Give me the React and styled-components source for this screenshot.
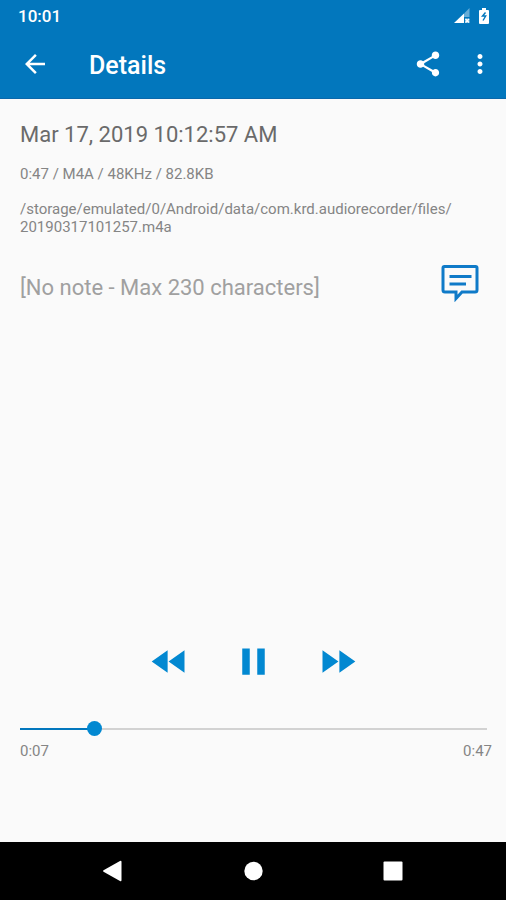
import React, { useState } from 'react';
import styled, { createGlobalStyle } from 'styled-components';

const GlobalStyle = createGlobalStyle`
  * {
    box-sizing: border-box;
  }

  body {
    background-color: #fafafa;
    font-family: Roboto, "Liberation Sans", sans-serif;
    margin: 0;
  }
`;

const Screen = styled.div`
  display: flex;
  flex-direction: column;
  min-height: 100vh;
`;

const Header = styled.header`
  background-color: #0277bd;
  border-bottom: 1px solid #0a68ab;
  color: white;
`;

const StatusBar = styled.div`
  align-items: center;
  display: flex;
  font-size: 17px;
  font-weight: 500;
  height: 32px;
  justify-content: space-between;
  padding: 0 16px 0 18px;
`;

const StatusIcons = styled.div`
  align-items: center;
  display: flex;
  gap: 8px;
`;

const Toolbar = styled.div`
  align-items: center;
  display: flex;
  height: 66px;
  padding: 0 11px 2px 20px;
`;

const Title = styled.h1`
  flex: 1;
  font-size: 25px;
  font-weight: 500;
  line-height: 28px;
  margin: 0;
  padding: 4px 0 0 39px;
`;

const IconButton = styled.button`
  align-items: center;
  background: none;
  border: 0;
  color: ${({ $color }) => $color || 'inherit'};
  cursor: pointer;
  display: flex;
  flex: none;
  height: ${({ $size }) => $size}px;
  justify-content: center;
  padding: 0;
  width: ${({ $size }) => $size}px;
`;

const ToolbarActions = styled.div`
  display: flex;
  gap: 22px;
`;

const Content = styled.main`
  display: flex;
  flex: 1;
  flex-direction: column;
  padding: 22px 20px 82px;
`;

const RecordingName = styled.h2`
  color: #6a6a6a;
  font-size: 22px;
  font-weight: 400;
  line-height: 28px;
  margin: 0;
`;

const Detail = styled.p`
  color: #858585;
  font-size: 15px;
  line-height: 18px;
  margin: ${({ $top }) => $top}px 0 0;
  overflow-wrap: anywhere;
`;

const NoteRow = styled.div`
  align-items: center;
  display: flex;
  justify-content: space-between;
  margin-top: 26px;
  padding-right: 6px;
`;

const Note = styled.p`
  color: #a0a0a0;
  font-size: 22px;
  line-height: 28px;
  margin: 0;
  padding-top: 12px;
`;

const Player = styled.section`
  margin-top: auto;
`;

const Controls = styled.div`
  display: flex;
  gap: 36px;
  justify-content: center;
`;

const SeekBar = styled.input`
  appearance: none;
  background: transparent;
  cursor: pointer;
  display: block;
  height: 16px;
  margin: 36px 0 0;
  width: calc(100% + 1px);

  &::-webkit-slider-runnable-track {
    background:
      linear-gradient(#0277bd, #0277bd) 0 / var(--played) 100% no-repeat,
      #d2d2d2;
    height: 2px;
  }

  &::-webkit-slider-thumb {
    appearance: none;
    background-color: #0288d1;
    border-radius: 50%;
    height: 15px;
    margin-top: -7px;
    width: 15px;
  }
`;

const Times = styled.div`
  color: #858585;
  display: flex;
  font-size: 15px;
  justify-content: space-between;
  line-height: 18px;
  margin: 5px -6px 0 0;
`;

const NavigationBar = styled.nav`
  align-items: center;
  background-color: black;
  color: white;
  display: flex;
  gap: 92px;
  height: 58px;
  justify-content: center;
`;

const DURATION = 47;

function formatTime(seconds) {
  return `${Math.floor(seconds / 60)}:${String(seconds % 60).padStart(2, '0')}`;
}

/**
 * Icon on the 24 unit material grid
 */
function Icon({ d, size }) {
  return (
    <svg width={size} height={size} viewBox="0 0 24 24" fill="currentColor" aria-hidden="true">
      <path d={d} />
    </svg>
  );
}

const icons = {
  back: 'M20 11H7.83l5.59-5.59L12 4l-8 8 8 8 1.41-1.41L7.83 13H20v-2z',
  share: 'M18 16.08c-.76 0-1.44.3-1.96.77L8.91 12.7c.05-.23.09-.46.09-.7s-.04-.47-.09-.7l7.05-4.11c.54.5 1.25.81 2.04.81 1.66 0 3-1.34 3-3s-1.34-3-3-3-3 1.34-3 3c0 .24.04.47.09.7L8.04 9.81C7.5 9.31 6.79 9 6 9c-1.66 0-3 1.34-3 3s1.34 3 3 3c.79 0 1.5-.31 2.04-.81l7.12 4.16c-.05.21-.08.43-.08.65 0 1.61 1.31 2.92 2.92 2.92s2.92-1.31 2.92-2.92-1.31-2.92-2.92-2.92z',
  more: 'M12 8c1.1 0 2-.9 2-2s-.9-2-2-2-2 .9-2 2 .9 2 2 2zm0 2c-1.1 0-2 .9-2 2s.9 2 2 2 2-.9 2-2-.9-2-2-2zm0 6c-1.1 0-2 .9-2 2s.9 2 2 2 2-.9 2-2-.9-2-2-2z',
  rewind: 'M11 18V6l-8.5 6 8.5 6zm.5-6l8.5 6V6l-8.5 6z',
  pause: 'M6 19h4V5H6v14zm8-14v14h4V5h-4z',
  play: 'M8 5v14l11-7z',
  forward: 'M4 18l8.5-6L4 6v12zm9-12v12l8.5-6L13 6z',
};

function SignalIcon() {
  return (
    <svg width="16" height="16" viewBox="0 0 16 16" fill="currentColor" aria-hidden="true">
      <path d="M15.500 0v9H10V5.500z" opacity="0.4" />
      <path d="M0 15L10 5.500V15z" />
      <path d="M11 10.500h4.500V15H11z" opacity="0.5" />
      <path d="M11.500 11l3.500 3.500M15 11l-3.500 3.500" stroke="currentColor" strokeWidth="1.4" />
    </svg>
  );
}

function BatteryIcon() {
  return (
    <svg width="12" height="18" viewBox="0 0 12 18" fill="currentColor" aria-hidden="true">
      <path d="M4 1h4v2h2q1 0 1 1v12q0 1-1 1H2q-1 0-1-1V4q0-1 1-1h2z" />
      <path d="M7.500 5.500L4.500 9h3.200L5 13.500" fill="none" stroke="#0277bd" strokeWidth="1.4" />
    </svg>
  );
}

function NoteIcon() {
  return (
    <svg width="40" height="40" viewBox="0 0 40 40" fill="none" stroke="currentColor" strokeWidth="3" aria-hidden="true">
      <path d="M4.500 4.500h31q1.500 0 1.500 1.500v22q0 2-2 2H22l-6 6.500V30H5q-2 0-2-2V6q0-1.500 1.500-1.500z" />
      <path d="M9.500 14.500h22M9.500 22h16.500" />
    </svg>
  );
}

/**
 * Recording details
 */
function App() {
  const [position, setPosition] = useState(7);
  const [playing, setPlaying] = useState(true);

  return (
    <Screen>
      <GlobalStyle />
      <Header>
        <StatusBar>
          <span>10:01</span>
          <StatusIcons>
            <SignalIcon />
            <BatteryIcon />
          </StatusIcons>
        </StatusBar>
        <Toolbar>
          <IconButton $size={30} aria-label="Back">
            <Icon d={icons.back} size={30} />
          </IconButton>
          <Title>Details</Title>
          <ToolbarActions>
            <IconButton $size={30} aria-label="Share">
              <Icon d={icons.share} size={30} />
            </IconButton>
            <IconButton $size={30} aria-label="More options">
              <Icon d={icons.more} size={30} />
            </IconButton>
          </ToolbarActions>
        </Toolbar>
      </Header>

      <Content>
        <RecordingName>Mar 17, 2019 10:12:57 AM</RecordingName>
        <Detail $top={16}>0:47 / M4A / 48KHz / 82.8KB</Detail>
        <Detail $top={17}>
          /storage/emulated/0/Android/data/com.krd.audiorecorder/files/
          <wbr />
          20190317101257.m4a
        </Detail>
        <NoteRow>
          <Note>[No note - Max 230 characters]</Note>
          <IconButton $size={40} $color="#0f7ac8" aria-label="Edit note">
            <NoteIcon />
          </IconButton>
        </NoteRow>

        <Player>
          <Controls>
            <IconButton $size={48} $color="#0288d1" aria-label="Rewind">
              <Icon d={icons.rewind} size={45} />
            </IconButton>
            <IconButton
              $size={48}
              $color="#0288d1"
              aria-label={playing ? 'Pause' : 'Play'}
              onClick={() => setPlaying(!playing)}
            >
              <Icon d={playing ? icons.pause : icons.play} size={45} />
            </IconButton>
            <IconButton $size={48} $color="#0288d1" aria-label="Fast forward">
              <Icon d={icons.forward} size={45} />
            </IconButton>
          </Controls>
          <SeekBar
            type="range"
            aria-label="Position"
            min={0}
            max={DURATION}
            value={position}
            onChange={(event) => setPosition(Number(event.target.value))}
            style={{ '--played': `${(position / DURATION) * 100}%` }}
          />
          <Times>
            <span>{formatTime(position)}</span>
            <span>{formatTime(DURATION)}</span>
          </Times>
        </Player>
      </Content>

      <NavigationBar>
        <IconButton $size={48} aria-label="System back">
          <svg width="24" height="24" viewBox="0 0 24 24" fill="currentColor" aria-hidden="true">
            <path d="M2.5 11.2L19 2q1.5-.7 1.5 1v18q0 1.7-1.5 1L2.5 12.8q-1-.8 0-1.6z" />
          </svg>
        </IconButton>
        <IconButton $size={48} aria-label="Home">
          <svg width="24" height="24" viewBox="0 0 24 24" fill="currentColor" aria-hidden="true">
            <circle cx="12.5" cy="12" r="9.2" />
          </svg>
        </IconButton>
        <IconButton $size={48} aria-label="Recent apps">
          <svg width="24" height="24" viewBox="0 0 24 24" fill="currentColor" aria-hidden="true">
            <rect x="2.5" y="2.5" width="19" height="19" rx="1" />
          </svg>
        </IconButton>
      </NavigationBar>
    </Screen>
  );
}

export default App;
